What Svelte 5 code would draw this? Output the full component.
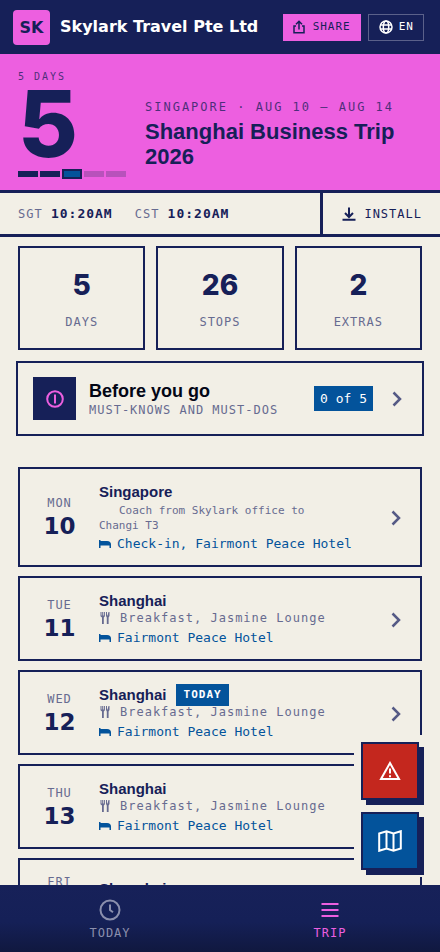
<script lang="ts">
  interface Day {
    weekday: string
    date: number
    city: string
    hotel?: string
    meal?: string
    transfer?: string
    today?: boolean
  }

  const stats = [
    {value: 5, label: 'DAYS'},
    {value: 26, label: 'STOPS'},
    {value: 2, label: 'EXTRAS'},
  ];

  const clocks = [
    {zone: 'SGT', time: '10:20AM'},
    {zone: 'CST', time: '10:20AM'},
  ];

  const progress = ['done', 'done', 'current', 'todo', 'todo'];

  const meal = 'Breakfast, Jasmine Lounge';
  const hotel = 'Fairmont Peace Hotel';

  const days: Day[] = [
    {weekday: 'MON', date: 10, city: 'Singapore', transfer: 'Coach from Skylark office to Changi T3', hotel: `Check-in, ${hotel}`},
    {weekday: 'TUE', date: 11, city: 'Shanghai', meal, hotel},
    {weekday: 'WED', date: 12, city: 'Shanghai', meal, hotel, today: true},
    {weekday: 'THU', date: 13, city: 'Shanghai', meal, hotel},
    {weekday: 'FRI', date: 14, city: 'Shanghai', meal},
  ];

  let tab = $state('trip');
</script>

{#snippet chevron()}
  <svg class="chevron" viewBox="0 0 10 16" aria-hidden="true">
    <path d="M1.500 1.500 8 8l-6.500 6.500" />
  </svg>
{/snippet}

<div class="app">
  <main>
    <header class="topbar">
      <span class="logo">SK</span>
      <span class="company">Skylark Travel Pte Ltd</span>
      <button class="share">
        <svg class="stroke" viewBox="0 0 12 14" width="12" height="14" aria-hidden="true">
          <path d="M3 6H1v6.800h10V6H9M6 9.500V1.500M3 4.300 6 1.300l3 3" />
        </svg>
        SHARE
      </button>
      <button class="lang">
        <svg class="stroke" viewBox="0 0 14 14" width="14" height="14" aria-hidden="true">
          <circle cx="7" cy="7" r="6" />
          <ellipse cx="7" cy="7" rx="2.700" ry="6" />
          <path d="M1.500 5h11M1.500 9h11" />
        </svg>
        EN
      </button>
    </header>

    <section class="hero">
      <div class="countdown">
        <span class="caption">5 DAYS</span>
        <span class="big">5</span>
        <div class="progress">
          {#each progress as state}
            <span class={state}></span>
          {/each}
        </div>
      </div>
      <div class="trip">
        <p>SINGAPORE · AUG 10 – AUG 14</p>
        <h1>Shanghai Business Trip 2026</h1>
      </div>
    </section>

    <div class="infobar">
      <div class="clocks">
        {#each clocks as clock}
          <span>{clock.zone} <b>{clock.time}</b></span>
        {/each}
      </div>
      <button class="install">
        <svg viewBox="0 0 14 14" width="14" height="14" aria-hidden="true">
          <path d="M7 .5v9M3 6l4 4 4-4M.5 12.800h13" />
        </svg>
        INSTALL
      </button>
    </div>

    <section class="stats">
      {#each stats as stat}
        <div class="stat">
          <strong>{stat.value}</strong>
          <span>{stat.label}</span>
        </div>
      {/each}
    </section>

    <button class="before">
      <span class="before-icon">
        <svg viewBox="0 0 18 18" width="18" height="18" aria-hidden="true">
          <circle cx="9" cy="9" r="7.800" />
          <path d="M9 4.500v9" />
        </svg>
      </span>
      <span class="before-text">
        <strong>Before you go</strong>
        <small>MUST-KNOWS AND MUST-DOS</small>
      </span>
      <span class="count">0 of 5</span>
      {@render chevron()}
    </button>

    <section class="days">
      {#each days as day}
        <button class="day">
          <span class="date">
            <span>{day.weekday}</span>
            <strong>{day.date}</strong>
          </span>
          <span class="details">
            <span class="city">
              {day.city}
              {#if day.today}
                <em>TODAY</em>
              {/if}
            </span>
            {#if day.transfer}
              <span class="transfer">{day.transfer}</span>
            {/if}
            {#if day.meal}
              <span class="meal">
                <svg viewBox="0 0 12 12" width="12" height="12" aria-hidden="true">
                  <path d="M1.500 0h1v3.500h.7V0h1v3.500h.7V0h1v4.300L4.800 5.500V12H3V5.500L1.500 4.300zM10.500 0V4L9.600 5.500V12H7.800V5.500L7 4V0h1v3.500h.5L9.500 0z" />
                </svg>
                {day.meal}
              </span>
            {/if}
            {#if day.hotel}
              <span class="hotel">
                <svg viewBox="0 0 12 8" width="12" height="8" aria-hidden="true">
                  <path d="M0 0h1.500v1H8Q12 1 12 4.500V8h-1.500V5.500h-9V8H0z" />
                </svg>
                {day.hotel}
              </span>
            {/if}
          </span>
          {@render chevron()}
        </button>
      {/each}
    </section>
  </main>

  <div class="actions">
    <button class="alert" aria-label="Emergency">
      <svg viewBox="0 0 22 20" width="22" height="20" aria-hidden="true">
        <path d="M11 2 20 18H2zM11 7.500v5M11 14.200v2" />
      </svg>
    </button>
    <button class="map" aria-label="Map">
      <svg viewBox="0 0 24 22" width="24" height="22" aria-hidden="true">
        <path d="M1.200 3.500 8.500 1.200l7 2.300 7.300-2.300v17.300l-7.300 2.300-7-2.300-7.300 2.300zM8.500 1.200v17.300M15.500 3.500v17.300" />
      </svg>
    </button>
  </div>

  <nav>
    <button class:active={tab === 'today'} onclick={() => (tab = 'today')}>
      <svg viewBox="0 0 22 22" width="22" height="22" aria-hidden="true">
        <circle cx="11" cy="11" r="9.500" />
        <path d="M11 5.500V11l3 2.200" />
      </svg>
      TODAY
    </button>
    <button class:active={tab === 'trip'} onclick={() => (tab = 'trip')}>
      <svg viewBox="0 0 22 22" width="22" height="22" aria-hidden="true">
        <path d="M2.500 5h17M2.500 11h17M2.500 17h17" />
      </svg>
      TRIP
    </button>
  </nav>
</div>

<style>
  :global(body) {
    margin: 0;
  }

  .app {
    --navy: #162058;
    --pink: #ed5fe0;
    --cream: #f2efe6;
    --blue: #03539b;
    --muted: #676b90;
    --mono: 'DejaVu Sans Mono', monospace;
    --title: 'Liberation Sans', sans-serif;
    --number: Inter, sans-serif;
    display: flex;
    flex-direction: column;
    height: 100vh;
    background: var(--cream);
    color: var(--navy);
    font: 12px/16px var(--mono);
  }

  button {
    padding: 0;
    border: 0;
    border-radius: 0;
    background: none;
    color: inherit;
    font: inherit;
    letter-spacing: inherit;
    text-align: left;
    cursor: pointer;
  }

  svg {
    flex: none;
    fill: none;
    stroke: currentColor;
    stroke-width: 2;
  }

  main {
    flex: 1;
    min-height: 0;
    overflow-y: auto;
    scrollbar-width: none;
  }

  /* top bar */
  .topbar {
    display: flex;
    align-items: center;
    height: 54px;
    box-sizing: border-box;
    padding: 0 16px 0 13px;
    background: var(--navy);
    color: #fff;
  }

  .logo,
  .company {
    font: bold 16px/20px 'DejaVu Sans', sans-serif;
  }

  .logo {
    width: 37px;
    border-radius: 4px;
    background: var(--pink);
    color: var(--navy);
    line-height: 35px;
    text-align: center;
  }

  .company {
    flex: 1;
    margin-left: 10px;
    white-space: nowrap;
  }

  .share,
  .lang {
    display: flex;
    align-items: center;
    gap: 6px;
    height: 27px;
    box-sizing: border-box;
    font-size: 11px;
    letter-spacing: 1px;
  }

  .share {
    gap: 8px;
    padding: 0 10px;
    margin-right: 7px;
    background: var(--pink);
    color: var(--navy);
  }

  .lang {
    padding: 0 9px 0 10px;
    border: 1px solid #5b618a;
  }

  .stroke {
    stroke-width: 1.5;
  }

  /* hero */
  .hero {
    display: flex;
    gap: 19px;
    padding: 15px 18px 11px;
    background: var(--pink);
    border-bottom: 3px solid var(--navy);
  }

  .countdown {
    display: flex;
    flex-direction: column;
  }

  .caption {
    font-size: 10px;
    letter-spacing: 2px;
    opacity: 0.75;
  }

  .big {
    margin-bottom: 7px;
    font: 800 92px/77px var(--number);
  }

  .progress {
    display: flex;
    align-items: center;
    gap: 2px;
    height: 10px;
  }

  .progress span {
    width: 20px;
    height: 6px;
    background: var(--navy);
  }

  .progress .current {
    height: 10px;
    box-sizing: border-box;
    border: 2px solid var(--navy);
    background: var(--blue);
  }

  .progress .todo {
    background: #b852bb;
  }

  .trip {
    flex: 1;
    align-self: flex-end;
    padding-bottom: 10px;
  }

  .trip p {
    margin: 0 0 4px;
    letter-spacing: 2px;
    white-space: nowrap;
    opacity: 0.75;
  }

  .trip h1 {
    margin: 0;
    font: bold 22px/25px var(--title);
  }

  /* clocks */
  .infobar {
    display: flex;
    height: 41px;
    border-bottom: 3px solid var(--navy);
  }

  .clocks {
    display: flex;
    flex: 1;
    align-items: center;
    gap: 22px;
    padding-left: 18px;
    color: var(--muted);
    letter-spacing: 1px;
  }

  .clocks b {
    color: var(--navy);
    font-size: 13px;
  }

  .install {
    display: flex;
    align-items: center;
    gap: 8px;
    padding: 0 18px 0 19px;
    border-left: 3px solid var(--navy);
    letter-spacing: 1px;
  }

  /* stats */
  .stats {
    display: grid;
    grid-template-columns: repeat(3, 1fr);
    gap: 11px;
    padding: 9px 18px 11px;
  }

  .stat {
    display: flex;
    flex-direction: column;
    align-items: center;
    gap: 12px;
    padding: 20px 0 18px;
    border: 2px solid var(--navy);
  }

  .stat strong {
    font: 800 28px/34px var(--number);
  }

  .stat span {
    color: var(--muted);
    letter-spacing: 1px;
  }

  /* before you go */
  .before {
    display: flex;
    align-items: center;
    width: calc(100% - 32px);
    height: 75px;
    margin: 0 16px 31px;
    padding: 0 20px 0 15px;
    border: 2px solid var(--navy);
  }

  .before-icon {
    display: grid;
    place-items: center;
    width: 43px;
    height: 43px;
    margin-right: 13px;
    background: var(--navy);
    color: var(--pink);
  }

  .before-text {
    display: flex;
    flex: 1;
    flex-direction: column;
    white-space: nowrap;
  }

  .before-text strong {
    color: #030615;
    font: bold 18px/22px var(--title);
  }

  .before-text small {
    color: var(--muted);
    font-size: 12px;
    letter-spacing: 1px;
  }

  .count {
    margin-right: 19px;
    padding: 0 6px;
    background: var(--blue);
    color: #fff;
    font-size: 13px;
    line-height: 25px;
  }

  .chevron {
    width: 10px;
    height: 16px;
    color: #555a85;
    stroke-width: 2.5;
  }

  /* days */
  .days {
    display: flex;
    flex-direction: column;
    gap: 9px;
    padding: 0 18px 24px;
  }

  .day {
    display: flex;
    align-items: center;
    padding: 14px 19px 12px 0;
    border: 2px solid var(--navy);
  }

  .date {
    display: flex;
    flex-direction: column;
    align-items: center;
    width: 79px;
    color: var(--muted);
    letter-spacing: 1px;
  }

  .date strong {
    color: var(--navy);
    font: bold 23px/30px 'DejaVu Sans', sans-serif;
    letter-spacing: 0;
  }

  .details {
    display: flex;
    flex: 1;
    flex-direction: column;
  }

  .city {
    display: flex;
    align-items: center;
    gap: 9px;
    height: 17px;
    font: bold 15px/17px var(--title);
  }

  .city em {
    padding: 0 7px 0 8px;
    background: var(--blue);
    color: #fff;
    font: bold 11px/22px var(--mono);
    letter-spacing: 1px;
  }

  .transfer {
    max-width: 240px;
    margin-top: 3px;
    color: var(--muted);
    font-size: 11px;
    line-height: 15px;
    text-indent: 20px;
  }

  .meal,
  .hotel {
    display: flex;
    align-items: center;
    white-space: nowrap;
  }

  .meal {
    gap: 9px;
    height: 18px;
    color: var(--muted);
    letter-spacing: 1px;
  }

  .hotel {
    gap: 6px;
    height: 18px;
    padding-top: 2px;
    color: var(--blue);
    font-size: 13px;
  }

  .meal svg,
  .hotel svg {
    fill: currentColor;
    stroke: none;
  }

  /* floating actions */
  .actions {
    position: fixed;
    right: 9px;
    bottom: 75px;
    display: flex;
    flex-direction: column;
    gap: 12px;
    padding: 7px 12px 7px 7px;
    background: var(--cream);
  }

  .actions button {
    display: grid;
    place-items: center;
    width: 58px;
    height: 58px;
    border: 2px solid var(--navy);
    box-shadow: 5px 5px 0 var(--navy);
    color: #fff;
  }

  .actions .alert {
    background: #c4271e;
  }

  .actions .map {
    background: var(--blue);
  }

  /* bottom tabs */
  nav {
    display: flex;
    height: 67px;
    background: linear-gradient(#172159 0%, #152057 55%, #10183f 100%);
  }

  nav button {
    display: flex;
    flex: 1;
    flex-direction: column;
    align-items: center;
    gap: 4px;
    padding-top: 14px;
    color: #8b8fad;
    letter-spacing: 1px;
  }

  nav .active {
    color: var(--pink);
  }
</style>
